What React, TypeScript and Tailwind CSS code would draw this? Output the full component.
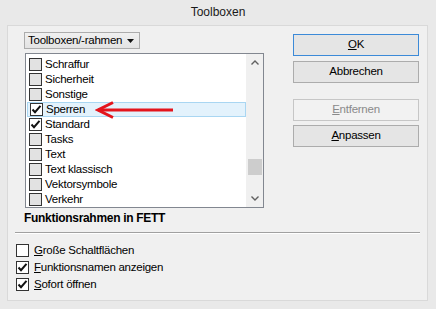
import type { ReactNode } from 'react'

const items = [
  { label: 'Schraffur', checked: false },
  { label: 'Sicherheit', checked: false },
  { label: 'Sonstige', checked: false },
  { label: 'Sperren', checked: true, selected: true },
  { label: 'Standard', checked: true },
  { label: 'Tasks', checked: false },
  { label: 'Text', checked: false },
  { label: 'Text klassisch', checked: false },
  { label: 'Vektorsymbole', checked: false },
  { label: 'Verkehr', checked: false },
]

function Check() {
  return (
    <svg width="11" height="11" viewBox="0 0 11 11" className="block">
      <path d="M1.5 5.5 L4 8.2 L9.5 1.8" fill="none" stroke="#111" strokeWidth="2" />
    </svg>
  )
}

function Box({ checked, grey }: { checked: boolean; grey?: boolean }) {
  return (
    <span
      className={`flex h-[13px] w-[13px] shrink-0 items-center justify-center border border-[#333] ${
        checked || !grey ? 'bg-white' : 'bg-[#e2e2e2]'
      }`}
    >
      {checked && <Check />}
    </span>
  )
}

function Button({
  children,
  def,
  disabled,
  className = '',
}: {
  children: ReactNode
  def?: boolean
  disabled?: boolean
  className?: string
}) {
  return (
    <div
      className={`flex h-[22px] w-[126px] items-center justify-center border ${
        def
          ? 'border-[#3c8ad8] bg-[#e5e5e5] text-black'
          : disabled
            ? 'border-[#c6c6c6] bg-[#f2f2f2] text-[#8a8a8a]'
            : 'border-[#acacac] bg-[#e5e5e5] text-black'
      } ${className}`}
    >
      {children}
    </div>
  )
}

export default function App() {
  return (
    <div
      className="flex h-[309px] w-[436px] flex-col bg-[#e9e9e9] text-[11.5px] tracking-[-0.25px] text-black"
      style={{ fontFamily: '"Liberation Sans", Arial, sans-serif' }}
    >
      {/* Title bar */}
      <div className="flex h-[25px] items-center justify-center pb-[1px] text-[12px] tracking-normal text-[#1a1a1a]">
        Toolboxen
      </div>

      {/* Dialog body */}
      <div className="mb-[8px] ml-[7px] mr-[8px] flex flex-1 flex-col border border-[#d9d9d9] bg-[#f0f0f0]">
        <div className="flex">
          {/* Left column */}
          <div className="pl-[16px] pt-[6px]">
            <div className="flex h-[17px] w-[116px] items-center justify-between whitespace-nowrap border border-[#acacac] bg-gradient-to-b from-[#f0f0f0] to-[#e3e3e3] pl-[3px] pr-[5px]">
              <span>Toolboxen/-rahmen</span>
              <svg width="7" height="4" viewBox="0 0 7 4">
                <path d="M0 0 H7 L3.5 4 Z" fill="#111" />
              </svg>
            </div>

            <div className="relative ml-[1px] mt-[4px] flex h-[155px] w-[239px] border border-[#828790] bg-white">
              <div className="flex-1 pl-[1px] pt-[3px]">
                {items.map((it) => (
                  <div
                    key={it.label}
                    className={`flex h-[15px] items-center gap-[3px] pl-[2px] ${
                      it.selected ? 'border border-[#a9d6f2] bg-[#e3f2fc] pl-[1px]' : ''
                    }`}
                  >
                    <Box checked={it.checked} grey />
                    <span className="leading-[15px]">{it.label}</span>
                  </div>
                ))}
              </div>

              {/* Scrollbar */}
              <div className="flex w-[17px] flex-col items-center bg-[#f0f0f0]">
                <div className="flex h-[17px] items-center justify-center">
                  <svg width="8" height="5" viewBox="0 0 8 5">
                    <path d="M0.5 4.5 L4 1 L7.5 4.5" fill="none" stroke="#606060" strokeWidth="1.4" />
                  </svg>
                </div>
                <div className="mt-[88px] h-[16px] w-[14px] bg-[#cdcdcd]" />
                <div className="flex-1" />
                <div className="flex h-[17px] items-center justify-center">
                  <svg width="8" height="5" viewBox="0 0 8 5">
                    <path d="M0.5 0.5 L4 4 L7.5 0.5" fill="none" stroke="#606060" strokeWidth="1.4" />
                  </svg>
                </div>
              </div>

              {/* Red annotation arrow */}
              <svg
                className="absolute left-[69px] top-[47px]"
                width="80"
                height="18"
                viewBox="0 0 80 18"
              >
                <path d="M3 9 H78" stroke="#e4141c" strokeWidth="3" />
                <path d="M18 1.5 L3 9 L18 16.5" fill="none" stroke="#e4141c" strokeWidth="3" />
              </svg>
            </div>

            <div className="mt-[3px] text-[12px] font-bold leading-[15px] tracking-[-0.3px]">
              Funktionsrahmen in FETT
            </div>
          </div>

          {/* Right column */}
          <div className="ml-[29px] flex flex-col pt-[8px]">
            <Button def>
              <span>
                <u>O</u>K
              </span>
            </Button>
            <Button className="mt-[5px]">Abbrechen</Button>
            <Button disabled className="mt-[16px]">
              <span>
                <u>E</u>ntfernen
              </span>
            </Button>
            <Button className="mt-[4px]">
              <span>
                <u>A</u>npassen
              </span>
            </Button>
          </div>
        </div>

        {/* Separator */}
        <div className="mx-[7px] mt-[6px] border-b border-t border-b-white border-t-[#a0a0a0]" />

        {/* Options */}
        <div className="ml-[8px] mt-[8px] flex flex-col">
          {[
            { u: 'G', rest: 'roße Schaltflächen', checked: false },
            { u: 'F', rest: 'unktionsnamen anzeigen', checked: true },
            { u: 'S', rest: 'ofort öffnen', checked: true },
          ].map((o) => (
            <div key={o.rest} className="flex h-[17px] items-center gap-[5px]">
              <Box checked={o.checked} />
              <span>
                <u>{o.u}</u>
                {o.rest}
              </span>
            </div>
          ))}
        </div>
      </div>
    </div>
  )
}
